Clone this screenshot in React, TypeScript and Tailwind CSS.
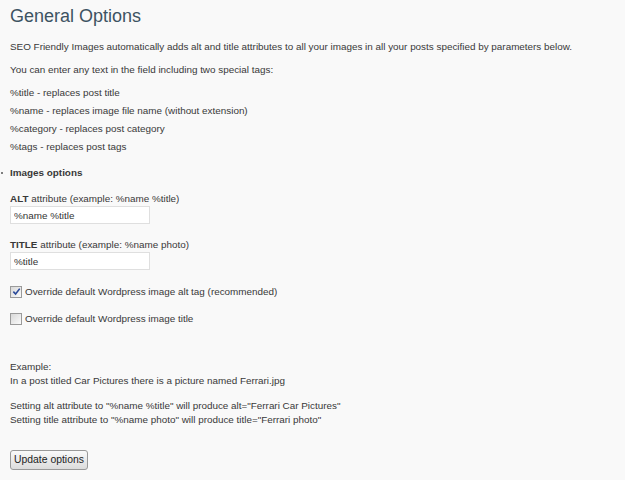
import { useState } from "react";

const TAGS = [
  "%title - replaces post title",
  "%name - replaces image file name (without extension)",
  "%category - replaces post category",
  "%tags - replaces post tags",
];

function Check({ checked, onChange }: { checked: boolean; onChange: (v: boolean) => void }) {
  return (
    <button
      type="button"
      onClick={() => onChange(!checked)}
      className="flex h-[12px] w-[12px] shrink-0 items-center justify-center border border-[#9a9a9a] bg-gradient-to-br from-[#d8d8d8] to-[#fbfbfb]"
    >
      {checked && (
        <svg viewBox="0 0 10 10" className="h-[9px] w-[9px]">
          <path d="M1.5 5.2 L4 7.8 L8.6 1.8" fill="none" stroke="#2b4a9a" strokeWidth="1.8" />
        </svg>
      )}
    </button>
  );
}

export default function App() {
  const [alt, setAlt] = useState("%name %title");
  const [title, setTitle] = useState("%title");
  const [overrideAlt, setOverrideAlt] = useState(true);
  const [overrideTitle, setOverrideTitle] = useState(false);

  return (
    <div className="min-h-[480px] w-[625px] bg-[#f9f9f9] px-[10px] pt-[2px] font-['Liberation_Sans',Arial,sans-serif] text-[9.9px] text-[#383838]">
      <h2 className="text-[18px] leading-[28px] text-[#3d5362]">General Options</h2>

      <p className="mt-[10px] leading-[13px]">
        SEO Friendly Images automatically adds alt and title attributes to all your images in all your posts
        specified by parameters below.
      </p>
      <p className="mt-[10px] leading-[13px]">You can enter any text in the field including two special tags:</p>

      {/* Tags */}
      <div className="mt-[10px] flex flex-col gap-[5px]">
        {TAGS.map((t) => (
          <p key={t} className="leading-[13px]">
            {t}
          </p>
        ))}
      </div>

      <h3 className="relative mt-[13px] font-bold leading-[13px]">
        <span className="absolute left-[-9px] top-[6px] h-[2px] w-[2px] rounded-full bg-[#555]" />
        Images options
      </h3>

      {/* Fields */}
      <div className="mt-[13px]">
        <label className="block leading-[13px]">
          <b className="font-bold">ALT</b> attribute (example: %name %title)
        </label>
        <input
          value={alt}
          onChange={(e) => setAlt(e.target.value)}
          className="mt-[1px] block h-[18px] w-[140px] border border-[#dfdfdf] bg-white px-[3px] text-[9.9px] text-[#333] outline-none"
        />
      </div>
      <div className="mt-[14px]">
        <label className="block leading-[13px]">
          <b className="font-bold">TITLE</b> attribute (example: %name photo)
        </label>
        <input
          value={title}
          onChange={(e) => setTitle(e.target.value)}
          className="mt-[1px] block h-[18px] w-[140px] border border-[#dfdfdf] bg-white px-[3px] text-[9.9px] text-[#333] outline-none"
        />
      </div>

      {/* Checkboxes */}
      <div className="mt-[15px] flex items-center gap-[3px] leading-[13px]">
        <Check checked={overrideAlt} onChange={setOverrideAlt} />
        <span>Override default Wordpress image alt tag (recommended)</span>
      </div>
      <div className="mt-[14px] flex items-center gap-[3px] leading-[13px]">
        <Check checked={overrideTitle} onChange={setOverrideTitle} />
        <span>Override default Wordpress image title</span>
      </div>

      {/* Example */}
      <div className="mt-[35px] leading-[14px]">
        <p>Example:</p>
        <p>In a post titled Car Pictures there is a picture named Ferrari.jpg</p>
        <p className="mt-[11px]">Setting alt attribute to "%name %title" will produce alt="Ferrari Car Pictures"</p>
        <p>Setting title attribute to "%name photo" will produce title="Ferrari photo"</p>
      </div>

      <button className="mt-[23px] h-[20px] rounded-[3px] border border-[#999] bg-gradient-to-b from-[#fafafa] to-[#dcdcdc] px-[3px] text-[10.4px] text-[#222]">
        Update options
      </button>
    </div>
  );
}
